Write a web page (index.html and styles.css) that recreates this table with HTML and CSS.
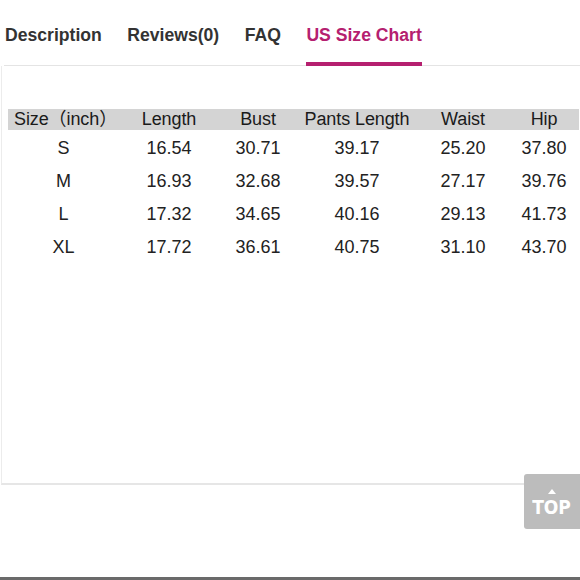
FILE: index.html
```html
<!DOCTYPE html>
<html>
<head>
<meta charset="utf-8">
<link rel="stylesheet" href="styles.css">
</head>
<body>
<div class="page">
  <nav class="tabs">
    <span class="tab">Description</span>
    <span class="tab">Reviews(0)</span>
    <span class="tab">FAQ</span>
    <span class="tab active">US Size Chart</span>
  </nav>
  <section class="panel">
    <table class="chart">
      <colgroup>
        <col class="c1"><col class="c2"><col class="c3"><col class="c4"><col class="c5"><col class="c6">
      </colgroup>
      <thead>
        <tr><th class="size-h">Size（inch）</th><th>Length</th><th>Bust</th><th>Pants Length</th><th>Waist</th><th>Hip</th></tr>
      </thead>
      <tbody>
        <tr><td>S</td><td>16.54</td><td>30.71</td><td>39.17</td><td>25.20</td><td>37.80</td></tr>
        <tr><td>M</td><td>16.93</td><td>32.68</td><td>39.57</td><td>27.17</td><td>39.76</td></tr>
        <tr><td>L</td><td>17.32</td><td>34.65</td><td>40.16</td><td>29.13</td><td>41.73</td></tr>
        <tr><td>XL</td><td>17.72</td><td>36.61</td><td>40.75</td><td>31.10</td><td>43.70</td></tr>
      </tbody>
    </table>
  </section>
  <div class="footer-space"></div>
  <div class="bottom-bar"></div>
  <a class="top-btn"><span class="tri"></span><span class="top-text">TOP</span></a>
</div>
</body>
</html>
```
FILE: styles.css
```css
* { box-sizing: border-box; }
html, body { margin: 0; padding: 0; background: #fff; }
body { width: 580px; height: 580px; overflow: hidden; font-family: "Liberation Sans", Arial, sans-serif; }
.page { position: relative; width: 580px; height: 580px; display: flex; flex-direction: column; }
.tabs {
  display: flex;
  gap: 25.5px;
  margin-left: 4px;
  padding-left: 1px;
  height: 66px;
  border-bottom: 1px solid #e4e4e4;
  align-items: flex-start;
}
.tab {
  font-size: 17.6px;
  font-weight: bold;
  color: #333;
  padding-top: 24px;
  height: 65px;
  line-height: 22px;
}
.tab.active {
  color: #b5206f;
  border-bottom: 4px solid #b5206f;
  height: 66px;
  margin-bottom: -1px;
}
.panel {
  height: 419px;
  border-left: 1px solid #ececec;
  border-bottom: 2px solid #e6e6e6;
  margin-left: 1px;
  padding: 43px 0 0 6px;
}
.chart {
  border-collapse: collapse;
  table-layout: fixed;
  width: 571px;
  color: #1e1e1e;
}
.c1 { width: 111px; } .c2 { width: 100px; } .c3 { width: 78px; }
.c4 { width: 120px; } .c5 { width: 92px; } .c6 { width: 70px; }
.chart th {
  background: #d4d4d4;
  font-weight: normal;
  font-size: 18px;
  height: 21px;
  line-height: 21px;
  padding: 0;
  text-align: center;
  color: #1a1a1a;
  letter-spacing: -0.1px;
}
.chart th.size-h { text-align: left; padding-left: 6px; font-family: "Liberation Sans", "Noto Sans CJK SC", sans-serif; white-space: nowrap; }
.chart td {
  font-size: 18px;
  height: 33px;
  line-height: 33px;
  padding: 0;
  text-align: center;
  color: #222;
}
.chart tbody tr:first-child td { padding-top: 2px; }
.footer-space { flex: 1; }
.bottom-bar { height: 3px; background: #6a6a6a; }
.top-btn {
  position: absolute;
  left: 524px;
  top: 474px;
  width: 56px;
  height: 55px;
  background: #bcbcbc;
  border-radius: 3px 0 0 3px;
  display: flex;
  flex-direction: column;
  align-items: center;
  justify-content: center;
  gap: 4px;
  padding-top: 2px;
}
.tri {
  width: 0; height: 0;
  border-left: 4px solid transparent;
  border-right: 4px solid transparent;
  border-bottom: 5px solid #fff;
}
.top-text {
  color: #fff;
  font-family: "DejaVu Sans", sans-serif;
  font-weight: bold;
  font-size: 19px;
  line-height: 19px;
  transform: scaleX(0.9);
}
```
